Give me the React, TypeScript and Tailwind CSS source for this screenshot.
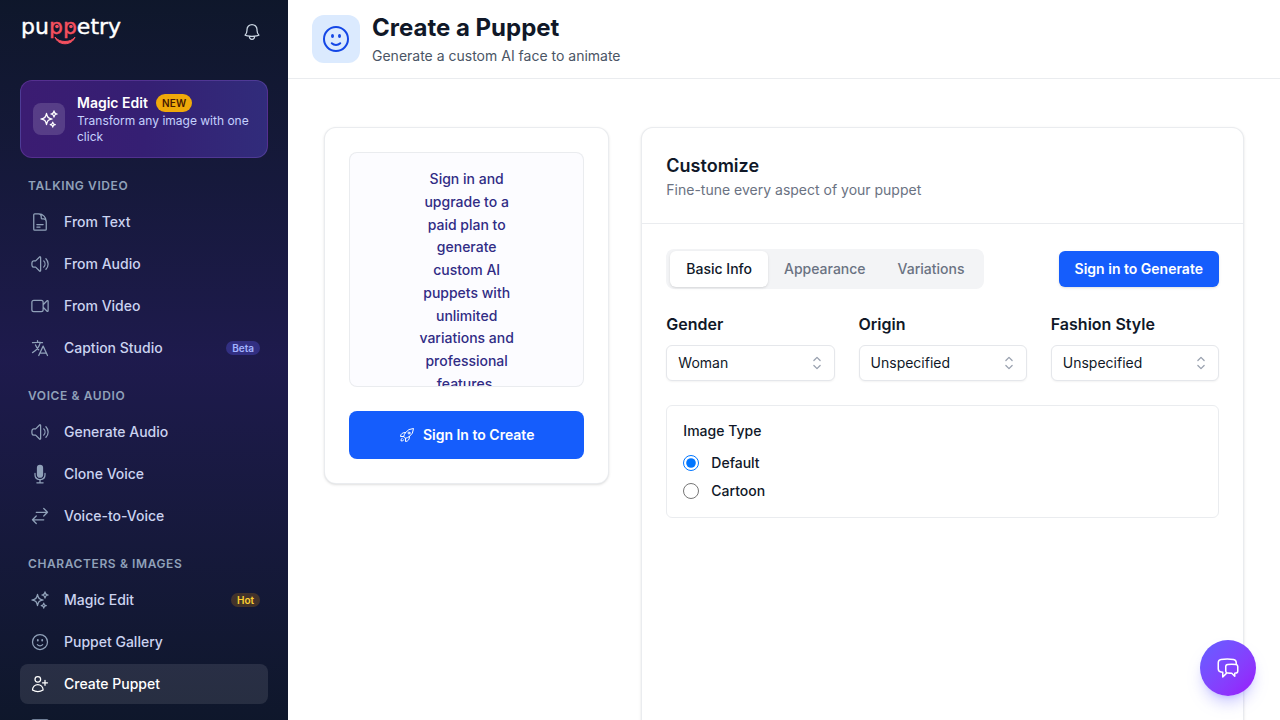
import { useState } from 'react';
import type { IconType } from 'react-icons';
import {
  HiChevronUpDown,
  HiMicrophone,
  HiOutlineArrowsRightLeft,
  HiOutlineBell,
  HiOutlineChatBubbleLeftRight,
  HiOutlineDocumentText,
  HiOutlineFaceSmile,
  HiOutlineLanguage,
  HiOutlinePhoto,
  HiOutlineRocketLaunch,
  HiOutlineSparkles,
  HiOutlineSpeakerWave,
  HiOutlineUserPlus,
  HiOutlineVideoCamera,
} from 'react-icons/hi2';
import clsx from 'clsx';

interface NavItem {
  label: string;
  icon: IconType;
  badge?: 'Beta' | 'Hot';
  active?: boolean;
}

const SECTIONS: { title: string; items: NavItem[] }[] = [
  {
    title: 'Talking Video',
    items: [
      { label: 'From Text', icon: HiOutlineDocumentText },
      { label: 'From Audio', icon: HiOutlineSpeakerWave },
      { label: 'From Video', icon: HiOutlineVideoCamera },
      { label: 'Caption Studio', icon: HiOutlineLanguage, badge: 'Beta' },
    ],
  },
  {
    title: 'Voice & Audio',
    items: [
      { label: 'Generate Audio', icon: HiOutlineSpeakerWave },
      { label: 'Clone Voice', icon: HiMicrophone },
      { label: 'Voice-to-Voice', icon: HiOutlineArrowsRightLeft },
    ],
  },
  {
    title: 'Characters & Images',
    items: [
      { label: 'Magic Edit', icon: HiOutlineSparkles, badge: 'Hot' },
      { label: 'Puppet Gallery', icon: HiOutlineFaceSmile },
      { label: 'Create Puppet', icon: HiOutlineUserPlus, active: true },
      { label: 'Image Gallery', icon: HiOutlinePhoto },
    ],
  },
];

const TABS = ['Basic Info', 'Appearance', 'Variations'];

const FIELDS = [
  { id: 'gender', label: 'Gender', options: ['Woman', 'Man'] },
  { id: 'origin', label: 'Origin', options: ['Unspecified'] },
  { id: 'fashion', label: 'Fashion Style', options: ['Unspecified'] },
];

function Logo() {
  return (
    <a href="#" aria-label="puppetry">
      <svg width="108" height="40" viewBox="0 0 108 40" fill="none">
        <text
          x="1"
          y="22"
          fontFamily="DejaVu Sans, sans-serif"
          fontSize="22"
          fill="#fff"
          stroke="#fff"
          strokeWidth="0.4"
          strokeLinejoin="round"
        >
          pu
          <tspan fill="#f4505f" stroke="#f4505f">pp</tspan>
          etry
        </text>
        <circle cx="37" cy="14.500" r="1.800" fill="#f4505f" />
        <circle cx="51" cy="14.500" r="1.800" fill="#f4505f" />
        <path d="M35 25c4 6 16 6 20 0-3 9-17 9-20 0z" fill="#f4505f" stroke="#f4505f" strokeLinejoin="round" />
      </svg>
    </a>
  );
}

function NavLink({ item }: { item: NavItem }) {
  const Icon = item.icon;
  return (
    <a
      href="#"
      className={clsx(
        'flex h-10 items-center gap-3.5 rounded-lg px-2.5 text-sm font-medium',
        item.active ? 'bg-white/10 text-white' : 'text-[#cbd3f0]',
      )}
    >
      <Icon className={clsx('size-5 shrink-0', item.active ? 'text-white' : 'text-slate-400')} />
      <span className="flex-1">{item.label}</span>
      {item.badge === 'Beta' && (
        <span className="-mr-0.5 rounded-full bg-indigo-500/30 px-1.5 text-[10px] leading-[14px] font-semibold text-indigo-300">
          Beta
        </span>
      )}
      {item.badge === 'Hot' && (
        <span className="-mr-0.5 rounded-full bg-amber-500/20 px-1.5 text-[10px] leading-[14px] font-semibold text-amber-300">
          Hot
        </span>
      )}
    </a>
  );
}

function Sidebar() {
  return (
    <aside className="flex w-72 shrink-0 flex-col overflow-hidden bg-linear-to-b from-slate-900 via-indigo-950 to-slate-900 px-5">
      <div className="flex h-16 shrink-0 items-center justify-between pr-1.5">
        <Logo />
        <button type="button" aria-label="Notifications" className="text-slate-300">
          <HiOutlineBell className="size-5" />
        </button>
      </div>

      <a
        href="#"
        className="mt-4 flex shrink-0 items-center gap-3 rounded-xl border border-purple-400/20 bg-linear-to-r from-[#3b1c72] via-[#351f73] to-[#312c7b] p-3"
      >
        <span className="flex size-8 shrink-0 items-center justify-center rounded-lg bg-white/15 text-white">
          <HiOutlineSparkles className="size-5" />
        </span>
        <span>
          <span className="flex h-5 items-center gap-2 text-sm font-semibold text-white">
            Magic Edit
            <span className="rounded-full bg-[#f0a90a] px-1.5 text-[10px] leading-[18px] font-semibold tracking-wide text-amber-950">
              NEW
            </span>
          </span>
          <span className="block text-xs text-indigo-200">Transform any image with one click</span>
        </span>
      </a>

      <nav>
        {SECTIONS.map((section) => (
          <div key={section.title} className="mt-5">
            <h2 className="mb-2 px-2 text-xs font-semibold tracking-wider text-slate-400 uppercase">
              {section.title}
            </h2>
            <div className="flex flex-col gap-0.5">
              {section.items.map((item) => (
                <NavLink key={item.label} item={item} />
              ))}
            </div>
          </div>
        ))}
      </nav>
    </aside>
  );
}

function PreviewCard() {
  return (
    <section className="rounded-xl border border-gray-200/80 bg-white p-6 shadow-sm">
      <div className="aspect-square overflow-hidden rounded-lg border border-gray-200/80 bg-[#fcfcff] px-16 py-[15px] text-center">
        <p className="text-sm leading-relaxed font-medium text-indigo-900">
          Sign in and upgrade to a paid plan to generate custom AI puppets with unlimited variations and
          professional features.
        </p>
      </div>
      <button
        type="button"
        className="mt-6 flex h-12 w-full items-center justify-center gap-2 rounded-lg bg-[#155dfc] text-sm font-semibold text-white"
      >
        <HiOutlineRocketLaunch className="size-4" />
        Sign In to Create
      </button>
    </section>
  );
}

function CustomizeCard() {
  const [tab, setTab] = useState(TABS[0]);
  const [imageType, setImageType] = useState('Default');

  return (
    <section className="min-h-[640px] rounded-xl border border-gray-200/80 bg-white shadow-sm">
      <div className="border-b border-gray-200/80 px-6 pt-6 pb-[23px]">
        <h2 className="text-lg leading-7 font-semibold text-gray-900">Customize</h2>
        <p className="text-sm text-gray-500">Fine-tune every aspect of your puppet</p>
      </div>

      <div className="flex flex-col gap-6 px-6 py-[25px]">
        <div className="flex items-center justify-between">
          <div role="tablist" className="flex h-10 rounded-lg bg-gray-100 px-1 py-0.5">
            {TABS.map((name) => (
              <button
                key={name}
                type="button"
                role="tab"
                aria-selected={tab === name}
                onClick={() => setTab(name)}
                className={clsx(
                  'rounded-md px-4 text-sm font-medium',
                  tab === name ? 'bg-white text-gray-900 shadow-sm' : 'text-gray-500',
                )}
              >
                {name}
              </button>
            ))}
          </div>
          <button
            type="button"
            className="h-9 rounded-md bg-[#155dfc] px-4 text-sm font-semibold text-white shadow-sm"
          >
            Sign in to Generate
          </button>
        </div>

        <div className="grid grid-cols-3 gap-6">
          {FIELDS.map((field) => (
            <div key={field.id}>
              <label htmlFor={field.id} className="mb-2.5 block text-base leading-[22px] font-semibold text-gray-900">
                {field.label}
              </label>
              <div className="relative">
                <select
                  id={field.id}
                  className="block h-9 w-full appearance-none rounded-md border border-gray-200 bg-white px-[11px] text-sm text-gray-900 shadow-xs"
                >
                  {field.options.map((option) => (
                    <option key={option}>{option}</option>
                  ))}
                </select>
                <HiChevronUpDown className="pointer-events-none absolute top-2 right-2 size-5 text-gray-400" />
              </div>
            </div>
          ))}
        </div>

        <fieldset className="rounded-md border border-gray-200/80 px-4 pt-[15px] pb-4">
          <legend className="float-left mb-3 w-full text-sm font-medium text-gray-900">Image Type</legend>
          <div className="clear-both flex flex-col gap-2">
            {['Default', 'Cartoon'].map((type) => (
              <label key={type} className="flex items-center gap-3 text-sm font-medium text-gray-900">
                <input
                  type="radio"
                  name="image-type"
                  className="size-4"
                  checked={imageType === type}
                  onChange={() => setImageType(type)}
                />
                {type}
              </label>
            ))}
          </div>
        </fieldset>
      </div>
    </section>
  );
}

export default function App() {
  return (
    <div className="flex h-screen overflow-hidden bg-white font-[Inter,sans-serif]">
      <Sidebar />

      <main className="min-w-0 flex-1 overflow-hidden">
        <header className="flex items-center gap-3 border-b border-gray-200/80 px-6 py-3">
          <div className="flex size-12 items-center justify-center rounded-xl bg-blue-100 text-blue-700">
            <HiOutlineFaceSmile className="size-8" />
          </div>
          <div>
            <h1 className="mb-0.5 text-2xl font-bold text-gray-900">Create a Puppet</h1>
            <p className="text-sm text-gray-600">Generate a custom AI face to animate</p>
          </div>
        </header>

        <div className="grid grid-cols-12 items-start gap-8 px-9 py-12">
          <div className="col-span-4">
            <PreviewCard />
          </div>
          <div className="col-span-8">
            <CustomizeCard />
          </div>
        </div>
      </main>

      <button
        type="button"
        aria-label="Open chat"
        className="fixed right-6 bottom-6 flex size-14 items-center justify-center rounded-full bg-linear-to-br from-indigo-500 to-purple-600 text-white shadow-lg shadow-indigo-500/30"
      >
        <HiOutlineChatBubbleLeftRight className="size-6" />
      </button>
    </div>
  );
}
